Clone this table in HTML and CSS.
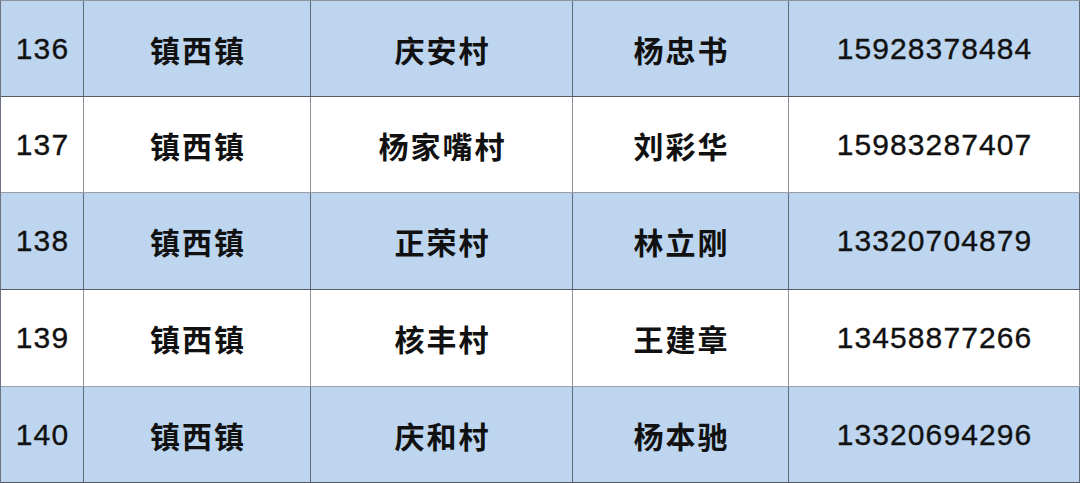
FILE: index.html
```html
<!DOCTYPE html>
<html lang="zh">
<head>
<meta charset="utf-8">
<link rel="stylesheet" href="styles.css">
</head>
<body>
<div class="table">
  <div class="row blue r1"><div class="c num">136</div><div class="c zh">镇西镇</div><div class="c zh">庆安村</div><div class="c zh">杨忠书</div><div class="c num">15928378484</div></div>
  <div class="row white r2"><div class="c num">137</div><div class="c zh">镇西镇</div><div class="c zh">杨家嘴村</div><div class="c zh">刘彩华</div><div class="c num">15983287407</div></div>
  <div class="row blue r3"><div class="c num">138</div><div class="c zh">镇西镇</div><div class="c zh">正荣村</div><div class="c zh">林立刚</div><div class="c num">13320704879</div></div>
  <div class="row white r4"><div class="c num">139</div><div class="c zh">镇西镇</div><div class="c zh">核丰村</div><div class="c zh">王建章</div><div class="c num">13458877266</div></div>
  <div class="row blue r5"><div class="c num">140</div><div class="c zh">镇西镇</div><div class="c zh">庆和村</div><div class="c zh">杨本驰</div><div class="c num">13320694296</div></div>
</div>
</body>
</html>
```
FILE: styles.css
```css
html, body { margin: 0; padding: 0; background: #fff; }
.table {
  width: 1080px;
  height: 483px;
  box-sizing: border-box;
  border-left: 1px solid #6b7480;
  border-top: 1px solid #8a94a0;
  display: flex;
  flex-direction: column;
}
.row {
  display: grid;
  grid-template-columns: 83px 227px 262px 216px 291px;
  box-sizing: border-box;
  border-bottom: 1px solid #555b63;
}
.r1, .r2, .r5 { height: 96px; }
.r3, .r4 { height: 97px; }
.blue { background: #bdd5ee; }
.white { background: #fff; border-bottom-color: #9a9ea3; }
.c {
  border-right: 1px solid #5f6b78;
  display: flex;
  align-items: center;
  justify-content: center;
  color: #111;
}
.white .c { border-right-color: #8c9096; }
.num {
  font-family: "Liberation Sans", Arial, sans-serif;
  font-size: 30px;
  letter-spacing: 1.1px;
  padding-left: 1px;
  -webkit-text-stroke: 0.35px #111;
}
.zh {
  font-family: "Noto Sans CJK SC", sans-serif;
  font-weight: 700;
  font-size: 30px;
  letter-spacing: 2px;
  padding-left: 2px;
}
```
